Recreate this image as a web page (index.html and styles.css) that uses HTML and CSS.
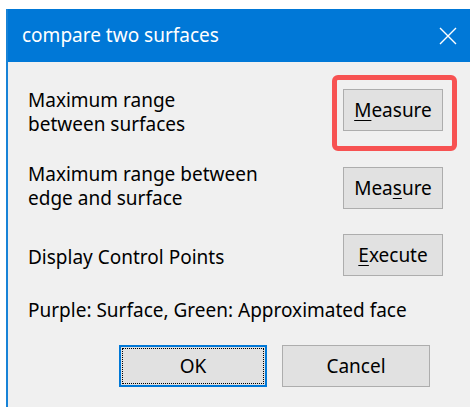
FILE: index.html
```html
<!DOCTYPE html>
<html>
<head>
<meta charset="utf-8">
<link rel="stylesheet" href="styles.css">
</head>
<body>
<div class="window">
  <div class="titlebar">
    <span class="title">compare two surfaces</span>
    <svg class="close" width="18" height="18" viewBox="0 0 18 18">
      <path d="M1 1 L17 17 M17 1 L1 17" stroke="#fff" stroke-width="1.4" fill="none"/>
    </svg>
  </div>
  <div class="content">
    <div class="row row-1">
      <div class="label">Maximum range<br>between surfaces</div>
      <div class="btn-wrap highlighted">
        <button class="btn"><u>M</u>easure</button>
      </div>
    </div>
    <div class="row row-2">
      <div class="label">Maximum range between<br>edge and surface</div>
      <div class="btn-wrap">
        <button class="btn">Mea<u>s</u>ure</button>
      </div>
    </div>
    <div class="row row-3">
      <div class="label">Display Control Points</div>
      <div class="btn-wrap">
        <button class="btn"><u>E</u>xecute</button>
      </div>
    </div>
    <div class="note">Purple: Surface, Green: Approximated face</div>
    <div class="actions">
      <button class="btn wide default"><span class="focus">OK</span></button>
      <button class="btn wide">Cancel</button>
    </div>
  </div>
</div>
</body>
</html>
```

FILE: styles.css
```css
html, body {
  margin: 0;
  padding: 0;
  background: #ffffff;
  overflow: hidden;
}

body {
  width: 470px;
  height: 407px;
  font-family: "Noto Sans", "Open Sans", sans-serif;
  font-size: 19px;
  color: #000;
}

.window {
  margin: 9px 0 0 6px;
  width: 464px;
  height: 398px;
  background: #f0f0f0;
  border-left: 2px solid #1883d7;
  box-sizing: border-box;
  overflow: hidden;
}

.titlebar {
  height: 53px;
  background: #0078d7;
  margin-left: -2px;
  display: flex;
  align-items: center;
  padding-left: 16px;
  position: relative;
}

.title {
  color: #fff;
  font-size: 19px;
  line-height: 24px;
  margin-top: -2px;
}

.close {
  position: absolute;
  left: 433px;
  top: 18px;
}

.content {
  padding: 27px 0 0 20px;
}

.row {
  display: flex;
  align-items: center;
  height: 42px;
}

.row-2 { margin-top: 36px; }
.row-3 { margin-top: 25px; }

.label {
  width: 315px;
  line-height: 24px;
}

.row-1 .label { margin-top: 4px; }
.row-2 .label { margin-top: -5px; }
.row-3 .label { margin-top: 4px; }

.btn-wrap {
  position: relative;
}

/* red annotation frame around the first button */
.highlighted::after {
  content: "";
  position: absolute;
  left: -11px;
  top: -14px;
  right: -14px;
  bottom: -20px;
  border: 5px solid #f75252;
  border-radius: 6px;
  pointer-events: none;
}

.btn {
  font-family: inherit;
  font-size: 19px;
  color: #000;
  background: #e1e1e1;
  border: 1px solid #adadad;
  width: 100px;
  height: 42px;
  padding: 0;
  margin: 0;
  display: block;
}

.btn u {
  text-decoration-thickness: 1px;
  text-underline-offset: 3px;
}

.note {
  margin-top: 22px;
  line-height: 24px;
}

.actions {
  display: flex;
  gap: 15px;
  margin-top: 23px;
  padding-left: 91px;
}

.btn.wide {
  width: 148px;
}

.btn.default {
  border: 2px solid #0078d7;
  position: relative;
}

.focus {
  position: absolute;
  inset: 1px;
  border: 1px dotted #000;
  display: flex;
  align-items: center;
  justify-content: center;
}
```
